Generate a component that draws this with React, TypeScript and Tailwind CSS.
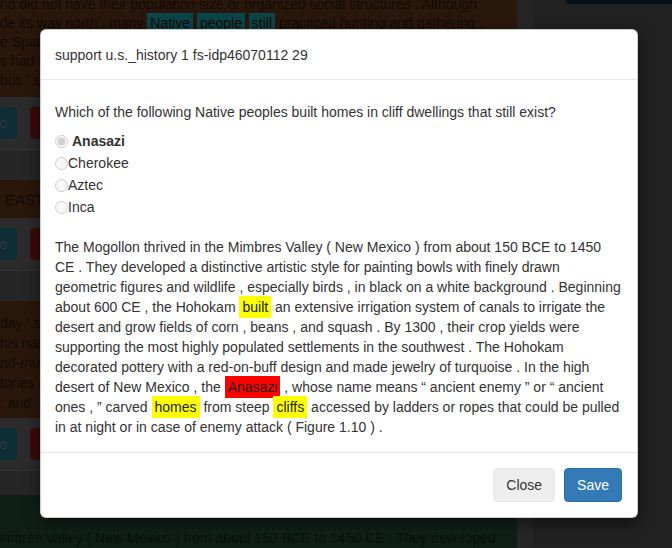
import * as React from 'react';

const font = { fontFamily: '"Liberation Sans", Arial, sans-serif' };

const options = [
  { label: 'Anasazi', checked: true },
  { label: 'Cherokee', checked: false },
  { label: 'Aztec', checked: false },
  { label: 'Inca', checked: false },
];

const Mark: React.FC<{ color: string; children: React.ReactNode }> = ({ color, children }) => (
  <span className={`${color} px-[3px] py-[3px] text-[#222]`}>{children}</span>
);

const ButtonRow: React.FC = () => (
  <div className="flex h-[53px] shrink-0 items-center gap-[13px] border-b border-[#333333] bg-[#2b2b2b]">
    <div className="-ml-[40px] flex h-[32px] w-[57px] items-center justify-end rounded-[4px] bg-[#0f2d37] pr-[10px] text-[14px] text-[#2a3a40]">
      o
    </div>
    <div className="h-[32px] w-[60px] rounded-[4px] bg-[#380b0b]" />
  </div>
);

const Background: React.FC = () => (
  <div className="flex h-full w-full">
    <main className="flex w-[517px] shrink-0 flex-col overflow-hidden bg-[#262626] text-[14px] leading-[19px]">
      <div className="h-[97px] shrink-0 overflow-hidden whitespace-nowrap bg-[#2a170b] text-[#120a05]">
        <div className="-mt-[5px] -ml-[8px]">and did not have their population size or organized social structures . Although</div>
        <div className="-ml-[20px]">
          made its way north , many <span className="bg-[#0b4449] px-[3px] py-[2px]">Native</span>{' '}
          <span className="bg-[#0b4449] px-[3px] py-[2px]">people</span>{' '}
          <span className="bg-[#0b4449] px-[3px] py-[2px]">still</span> practiced hunting and gathering .
        </div>
        <div>e Spanish</div>
        <div>s had</div>
        <div>bus ' s</div>
      </div>
      <ButtonRow />
      <div className="h-[30px] shrink-0" />
      <div className="flex h-[38px] shrink-0 items-center bg-[#2a170b] pl-[5px] text-[15px] text-[#120a05]">EAST</div>
      <ButtonRow />
      <div className="h-[30px] shrink-0" />
      <div className="h-[117px] shrink-0 overflow-hidden whitespace-nowrap bg-[#2a170b] pt-[12px] leading-[20px] text-[#120a05]">
        <div>day ' s</div>
        <div>his nar</div>
        <div>nd-mu</div>
        <div>tories ,</div>
        <div>, and</div>
      </div>
      <ButtonRow />
      <div className="h-[24px] shrink-0" />
      <div className="flex-1 overflow-hidden whitespace-nowrap bg-[#0f1f18] pt-[34px] text-[#0b0f0c]">
        <div className="-ml-[12px]">Mimbres Valley ( New Mexico ) from about 150 BCE to 1450 CE . They developed</div>
      </div>
    </main>
    <div className="w-[16px] shrink-0 bg-[#262626]" />
    <aside className="flex-1 bg-[#212121]">
      <div className="ml-[32px] h-[4px] rounded-bl-[6px] bg-[#07111c]" />
    </aside>
  </div>
);

export default function App() {
  return (
    <div className="relative h-[548px] w-[672px] overflow-hidden bg-[#222222]" style={font}>
      <Background />
      <div className="absolute inset-0 flex items-start justify-start pl-[40px] pt-[29px]">
        <div className="w-[598px] rounded-[6px] border border-black/20 bg-white text-[14px] leading-[20px] text-[#333333] shadow-[0_5px_15px_rgba(0,0,0,0.5)]">
          <div className="border-b border-[#e5e5e5] px-[14px] pt-[15px] pb-[14px]">
            <h4 className="text-[14px] leading-[20px]">support u.s._history 1 fs-idp46070112 29</h4>
          </div>
          <div className="py-[15px] pl-[14px] pr-[15px]">
            <p className="mt-[7px]">Which of the following Native peoples built homes in cliff dwellings that still exist?</p>
            <div className="mt-[8px]">
              {options.map((o) => (
                <div key={o.label} className="flex h-[22px] items-center">
                  <input
                    type="radio"
                    name="answer"
                    disabled
                    defaultChecked={o.checked}
                    className="m-0 h-[13px] w-[13px]"
                  />
                  {o.checked ? (
                    <span className="ml-[4px] font-bold">{o.label}</span>
                  ) : (
                    <span>{o.label}</span>
                  )}
                </div>
              ))}
            </div>
            <p className="mt-[19px]">
              The Mogollon thrived in the Mimbres Valley ( New Mexico ) from about 150 BCE to 1450 CE . They developed a
              distinctive artistic style for painting bowls with finely drawn geometric figures and wildlife , especially
              birds , in black on a white background . Beginning about 600 CE , the Hohokam{' '}
              <Mark color="bg-[#ffff00]">built</Mark> an extensive irrigation system of canals to irrigate the desert
              and grow fields of corn , beans , and squash . By 1300 , their crop yields were supporting the most highly
              populated settlements in the southwest . The Hohokam decorated pottery with a red-on-buff design and made
              jewelry of turquoise . In the high desert of New Mexico , the <Mark color="bg-[#ff0000]">Anasazi</Mark> ,
              whose name means “ ancient enemy ” or “ ancient ones , ” carved <Mark color="bg-[#ffff00]">homes</Mark>{' '}
              from steep <Mark color="bg-[#ffff00]">cliffs</Mark> accessed by ladders or ropes that could be pulled in at
              night or in case of enemy attack ( Figure 1.10 ) .
            </p>
          </div>
          <div className="flex justify-end gap-[9px] border-t border-[#e5e5e5] p-[15px]">
            <button className="h-[34px] rounded-[4px] border border-[#e8e8e8] bg-[#eeeeee] px-[12px] text-[14px] text-[#333333]">
              Close
            </button>
            <button className="h-[34px] rounded-[4px] border border-[#2e6da4] bg-[#337ab7] px-[12px] text-[14px] text-white">
              Save
            </button>
          </div>
        </div>
      </div>
    </div>
  );
}
